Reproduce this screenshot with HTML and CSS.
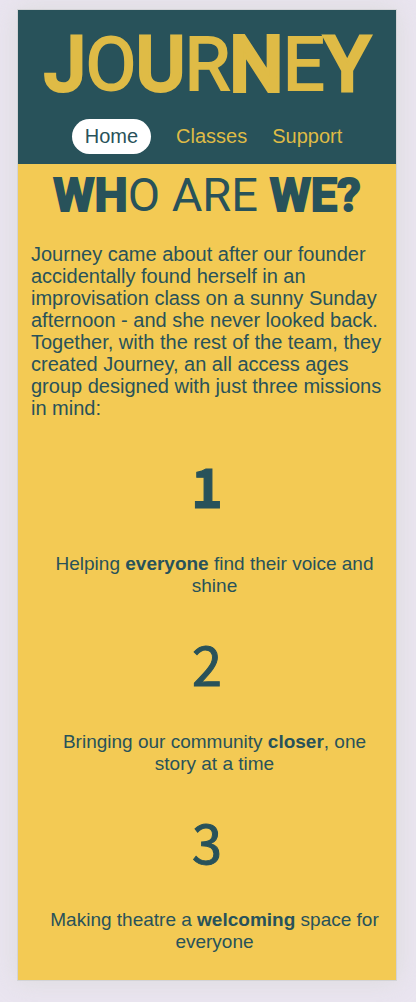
FILE: index.html
```html
<!DOCTYPE html>
<html lang="en">
<head>
<meta charset="utf-8">
<meta name="viewport" content="width=device-width, initial-scale=1">
<title>Journey</title>
<link rel="stylesheet" href="styles.css">
</head>
<body>
<div class="card">
  <header class="header">
    <div class="logo"><span class="bold">J</span><span class="medium">O</span><span class="bold">U</span><span class="medium">R</span><span class="black">N</span><span class="medium">E</span><span class="bold">Y</span></div>
    <nav class="nav">
      <a class="nav-link active" href="#home">Home</a>
      <a class="nav-link" href="#classes">Classes</a>
      <a class="nav-link" href="#support">Support</a>
    </nav>
  </header>
  <main class="main">
    <h1 class="title"><span class="heavy">WH</span>O ARE <span class="heavy">WE?</span></h1>
    <p class="intro">Journey came about after our founder accidentally found herself in an improvisation class on a sunny Sunday afternoon - and she never looked back. Together, with the rest of the team, they created Journey, an all access ages group designed with just three missions in mind:</p>
    <section class="mission">
      <h2 class="number one">1</h2>
      <p class="text">Helping <strong>everyone</strong> find their voice and shine</p>
    </section>
    <section class="mission">
      <h2 class="number">2</h2>
      <p class="text">Bringing our community <strong>closer</strong>, one story at a time</p>
    </section>
    <section class="mission">
      <h2 class="number">3</h2>
      <p class="text">Making theatre a <strong>welcoming</strong> space for everyone</p>
    </section>
  </main>
</div>
</body>
</html>
```
FILE: styles.css
```css
* { box-sizing: border-box; }

body {
  margin: 0;
  padding: 9px 19px 21px 17px;
  background: #eae5f0;
  color: #28525a;
  font: 20px/22px "Liberation Sans", Arial, sans-serif;
}

.card {
  border: 1px solid #d3d3d6;
  background: #f3ca54;
  box-shadow: 0 0 24px rgba(210, 212, 205, 0.6);
}

.header {
  padding: 16px 12px 10px;
  background: #28525a;
  color: #dfbb46;
}

.logo, .title, .number {
  font-family: Roboto, sans-serif;
  font-weight: 400;
  text-align: center;
  white-space: nowrap;
  paint-order: stroke fill;
  stroke-linejoin: round;
}

.logo {
  font-size: 74px;
  line-height: 78px;
}

.medium { -webkit-text-stroke: 2px currentColor; }
.bold { -webkit-text-stroke: 5px currentColor; }
.black { -webkit-text-stroke: 6px currentColor; }
.heavy { font-weight: 700; -webkit-text-stroke: 2px currentColor; }

.nav {
  display: flex;
  justify-content: center;
  gap: 25px;
  margin-top: 15px;
}

.nav-link {
  padding: 6px 0 7px;
  color: inherit;
  text-decoration: none;
}

.active {
  padding: 6px 13px 7px;
  border-radius: 18px;
  background: #fff;
  color: #28525a;
}

.main { padding: 2px 13px 27px; }

.title {
  margin: 0;
  font-size: 47px;
  line-height: 58px;
}

.intro { margin: 19px 0 0; }

.mission {
  padding-left: 15px;
  text-align: center;
}

.number {
  margin: 37px 15px 0 0;
  font-family: "Noto Sans CJK JP", sans-serif;
  font-size: 54px;
  line-height: 58px;
  -webkit-text-stroke: 1px currentColor;
}

.one { font-weight: 700; }

.text {
  margin: 39px 0 0;
  font-size: 19px;
}
```
